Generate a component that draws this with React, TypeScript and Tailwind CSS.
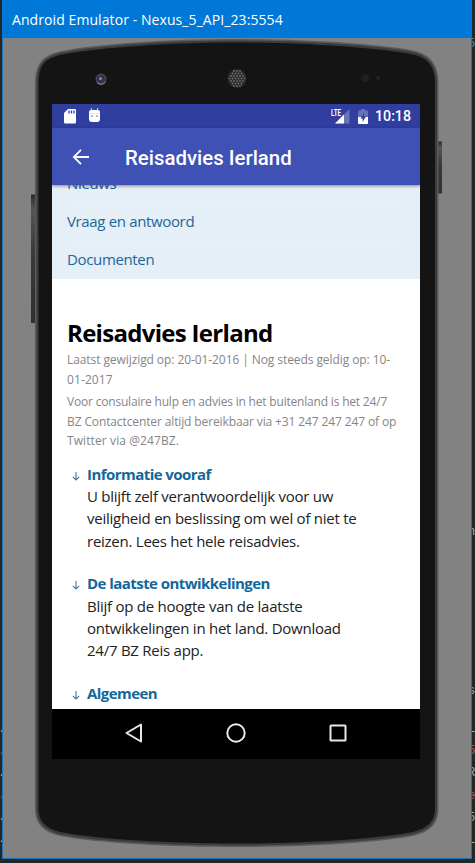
import React from 'react';

const meshDots = [-7.5, -5, -2.5, 0, 2.5, 5, 7.5].flatMap((y, row) =>
  [-9, -6, -3, 0, 3, 6, 9].map((x) => ({ x: x + (row % 2) * 1.5, y })).filter((d) => d.x * d.x + d.y * d.y < 72),
);

function PhoneShell() {
  return (
    <svg className="absolute left-0 top-0" width="475" height="863" viewBox="0 0 475 863" aria-hidden="true">
      <defs>
        <linearGradient id="key" x1="0" y1="0" x2="0" y2="1">
          <stop offset="0" stopColor="#2b2b2b" />
          <stop offset=".12" stopColor="#555" />
          <stop offset=".45" stopColor="#3a3a3a" />
          <stop offset="1" stopColor="#303030" />
        </linearGradient>
      </defs>
      <rect x="31" y="194.500" width="5" height="128.500" fill="url(#key)" />
      <rect x="438" y="141.500" width="4" height="52" fill="url(#key)" />
      <path
        d="M35 84C35 64 42 55 62 51C100 43.500 170 39 236 39C303 39 372 43.500 411 50C430 53.500 438.500 64 438.500 84V808C438.500 824 430 832 413 836C372 843.500 303 847 236 847C170 847 100 843.500 60 836C43 832 35 824 35 808Z"
        fill="#5a5a5a"
      />
      <path
        d="M36.500 84C36.500 65 43 56.500 62 52.500C100 45 170 40.500 236 40.500C303 40.500 372 45 411 51.500C429 55 437 65 437 84V808C437 823 429 830.500 413 834.500C372 842 303 845.500 236 845.500C170 845.500 100 842 60 834.500C44 830.500 36.500 823 36.500 808Z"
        fill="#3c3c3c"
      />
      <path
        d="M38.500 84C38.500 66 44 58.500 62 54.500C100 47.500 170 42.500 236 42.500C303 42.500 372 47.500 411 54C428 57.500 435 66 435 84V808C435 821 428 828 413 832C372 839.500 303 843.500 236 843.500C170 843.500 100 839.500 60 832C45 828 38.500 821 38.500 808Z"
        fill="#141414"
      />
      <circle cx="101" cy="79" r="5.500" fill="#4a4652" />
      <circle cx="100.800" cy="79" r="4" fill="#34304b" />
      <circle cx="100.500" cy="78.500" r="1.500" fill="#8c89a5" />
      <path d="M97 82.500A5.300 5.300 0 0 0 105.500 82" fill="none" stroke="#8f8d94" />
      <circle cx="237" cy="78.500" r="9.500" fill="#2a2a2a" />
      <g fill="#6e6e6e">
        {meshDots.map((d) => (
          <circle key={`${d.x}:${d.y}`} cx={237 + d.x} cy={78.5 + d.y} r=".9" />
        ))}
      </g>
      <circle cx="365" cy="78" r="4" fill="#1f1f1f" />
      <circle cx="378" cy="78" r="2.200" fill="#222" />
    </svg>
  );
}

function StatusBar() {
  return (
    <div className="flex h-6 shrink-0 items-center bg-[#303f9f] pl-3 pr-[9px]">
      <svg width="12" height="15" viewBox="0 0 12 15" className="shrink-0">
        <path d="M4 0H11Q12 0 12 1V13Q12 14.500 10.800 14.500H1.200Q0 14.500 0 13V4Z" fill="#fff" />
        <path d="M5 1.500V4.500M7.500 1.500V4.500M10 1.500V4.500" stroke="#303f9f" strokeWidth="1.300" />
      </svg>
      <svg width="13" height="15" viewBox="0 0 13 15" className="mb-0.5 ml-3 shrink-0">
        <path d="M3 0L4.200 3M10 0L8.800 3" stroke="#d4d8ee" />
        <path d="M1 4Q1 2 3 2H10Q12 2 12 4V11Q12 14 9 14H4Q1 14 1 11Z" fill="#fff" />
        <path d="M.8 5.500H12.200" stroke="#c9ceea" strokeWidth=".6" />
        <circle cx="4" cy="8" r=".7" fill="#303f9f" />
        <circle cx="9" cy="8" r=".7" fill="#303f9f" />
      </svg>
      <div className="ml-auto flex items-center">
        <svg width="19" height="15" viewBox="0 0 19 15">
          <path d="M18.500 0V14.500H4Z" fill="#6a75b9" />
          <path d="M13 5.500V14.500H4Z" fill="#fff" />
          <path d="M0 0H10.500V7.500H0Z" fill="#303f9f" />
          <text x="0" y="6.800" fontSize="9" fontWeight="700" fill="#fff" fontFamily="Roboto, sans-serif" textLength="10" lengthAdjust="spacingAndGlyphs">LTE</text>
        </svg>
        <svg width="10" height="15" viewBox="0 0 10 15" className="ml-2">
          <path d="M0 2.500Q0 1.500 1 1.500H3V0H7V1.500H9Q10 1.500 10 2.500V15H0Z" fill="#6670b7" />
          <path d="M0 8H10V14Q10 15 9 15H1Q0 15 0 14Z" fill="#fff" />
          <path d="M6 4L2.500 9.500H4.600V13L8 7.500H6Z" fill="#303f9f" />
        </svg>
        <span className="ml-[7px] font-[Roboto,sans-serif] text-[14.200px] font-medium leading-6 text-white">10:18</span>
      </div>
    </div>
  );
}

function AppBar() {
  return (
    <header className="relative flex h-[57px] shrink-0 items-center bg-[#3f51b5] pl-5 pt-[3px] shadow-[0_1px_3px_#00000070]">
      <svg width="18" height="16" viewBox="0 0 18 16" fill="none" stroke="#fff" strokeWidth="1.800" className="-mt-[3px]">
        <path d="M17 8H2M9 .8L1.800 8L9 15.200" />
      </svg>
      <h1 className="ml-[35px] whitespace-nowrap font-[Roboto,sans-serif] text-[20.400px] font-medium leading-[30px] text-white">Reisadvies Ierland</h1>
    </header>
  );
}

function Arrow() {
  return (
    <svg width="8" height="9" viewBox="0 0 8 9" className="mt-[9px] shrink-0" fill="none" stroke="#3b7ba2" strokeWidth="1.100">
      <path d="M4 0V8M.8 4.800L4 8L7.200 4.800" />
    </svg>
  );
}

function Item({ title, lines }: { title: string; lines: string[] }) {
  return (
    <li className="flex gap-[7px] pl-[5px]">
      <Arrow />
      <div className="text-[15px] leading-[22.400px] tracking-[-0.250px]">
        <h3 className="font-bold tracking-[-0.550px] text-[#14679b]">{title}</h3>
        {lines.map((line) => (
          <p key={line}>{line}</p>
        ))}
      </div>
    </li>
  );
}

function Page() {
  return (
    <main className="min-h-0 flex-1 overflow-hidden whitespace-nowrap bg-white font-['Open_Sans',sans-serif]">
      <nav className="h-[94px] overflow-hidden bg-[#e5eff7] px-[15px] text-[15px] leading-[37px] tracking-[-0.350px] text-[#1e6698]">
        <div className="-mt-5 border-b border-[#e9f1f8]">Nieuws</div>
        <div className="border-b border-[#e9f1f8]">Vraag en antwoord</div>
        <div>Documenten</div>
      </nav>
      <div className="px-[15px] pt-[37px]">
        <h2 className="text-[24px] font-bold leading-[34px] tracking-[-0.700px] text-black">Reisadvies Ierland</h2>
        <div className="text-[12px] leading-[19.500px] tracking-[-0.080px] text-[#858585]">
          <p>Laatst gewijzigd op: 20-01-2016 | Nog steeds geldig op: 10-</p>
          <p className="tracking-[0.100px]">01-2017</p>
          <p className="mt-[3px] tracking-[-0.190px]">Voor consulaire hulp en advies in het buitenland is het 24/7</p>
          <p className="tracking-[-0.120px]">BZ Contactcenter altijd bereikbaar via +31 247 247 247 of op</p>
          <p className="tracking-[0.100px]">Twitter via @247BZ.</p>
        </div>
        <ul className="mt-3 flex flex-col gap-5 text-[#222]">
          <Item
            title="Informatie vooraf"
            lines={['U blijft zelf verantwoordelijk voor uw', 'veiligheid en beslissing om wel of niet te', 'reizen. Lees het hele reisadvies.']}
          />
          <Item
            title="De laatste ontwikkelingen"
            lines={['Blijf op de hoogte van de laatste', 'ontwikkelingen in het land. Download', '24/7 BZ Reis app.']}
          />
          <Item title="Algemeen" lines={[]} />
        </ul>
      </div>
    </main>
  );
}

function NavBar() {
  return (
    <footer className="flex h-[50px] shrink-0 items-center justify-between bg-black px-[73px] pb-0.5">
      <svg width="18" height="20" viewBox="0 0 18 20" fill="none" stroke="#e8e8e8" strokeWidth="2" strokeLinejoin="round">
        <path d="M16 1.500V18.500L1.500 10Z" />
      </svg>
      <svg width="20" height="20" viewBox="0 0 20 20" fill="none" stroke="#e8e8e8" strokeWidth="2">
        <circle cx="10" cy="10" r="8.700" />
      </svg>
      <svg width="18" height="18" viewBox="0 0 18 18" fill="none" stroke="#e8e8e8" strokeWidth="2">
        <rect x="1.500" y="1.500" width="15" height="15" rx=".5" />
      </svg>
    </footer>
  );
}

export default function App() {
  return (
    <div className="relative flex h-[863px] w-[475px] overflow-hidden bg-[#242728]">
      <div className="w-[2px] shrink-0 overflow-hidden pt-[718px] font-['Liberation_Mono',monospace] text-[12px] leading-[22.100px] text-[#b8b8b8]">
        <div>/</div>
        <div className="text-[#c75450]">/</div>
        <div>/</div>
        <div className="text-[#c75450]">/</div>
        <div>/</div>
        <div>/</div>
      </div>
      <div className="flex h-[859px] w-[470px] shrink-0 flex-col border-x border-b border-[#2271b0] bg-[#828282]">
        <div className="-mx-px flex h-[38px] shrink-0 items-center bg-[#0078d7] pl-2.5 font-['Open_Sans',sans-serif] text-[14px] tracking-[0.080px] text-white">
          <span className="whitespace-nowrap">Android Emulator - Nexus_5_API_23:5554</span>
        </div>
        <PhoneShell />
        <div className="relative ml-[49px] mt-[66px] flex h-[655px] w-[368px] flex-col overflow-hidden">
          <StatusBar />
          <AppBar />
          <Page />
          <NavBar />
        </div>
      </div>
      <div className="w-[3px] shrink-0 overflow-hidden pt-[33px] font-['Liberation_Mono',monospace] text-[12px] leading-[22.100px] text-[#a8a8a8]">
        <div className="-ml-1 text-[#4a90b8]">5</div>
        <div className="-ml-1 mt-[466px]">n</div>
        <div className="-ml-1 mt-[137px]">s</div>
        <div className="-ml-1 mt-[16px]">L</div>
        <div className="-ml-1 text-[#c75450]">5</div>
        <div className="-ml-1">R</div>
        <div className="-ml-1 text-[#c75450]">e</div>
        <div className="-ml-1">5</div>
        <div className="-ml-1">L</div>
      </div>
    </div>
  );
}
